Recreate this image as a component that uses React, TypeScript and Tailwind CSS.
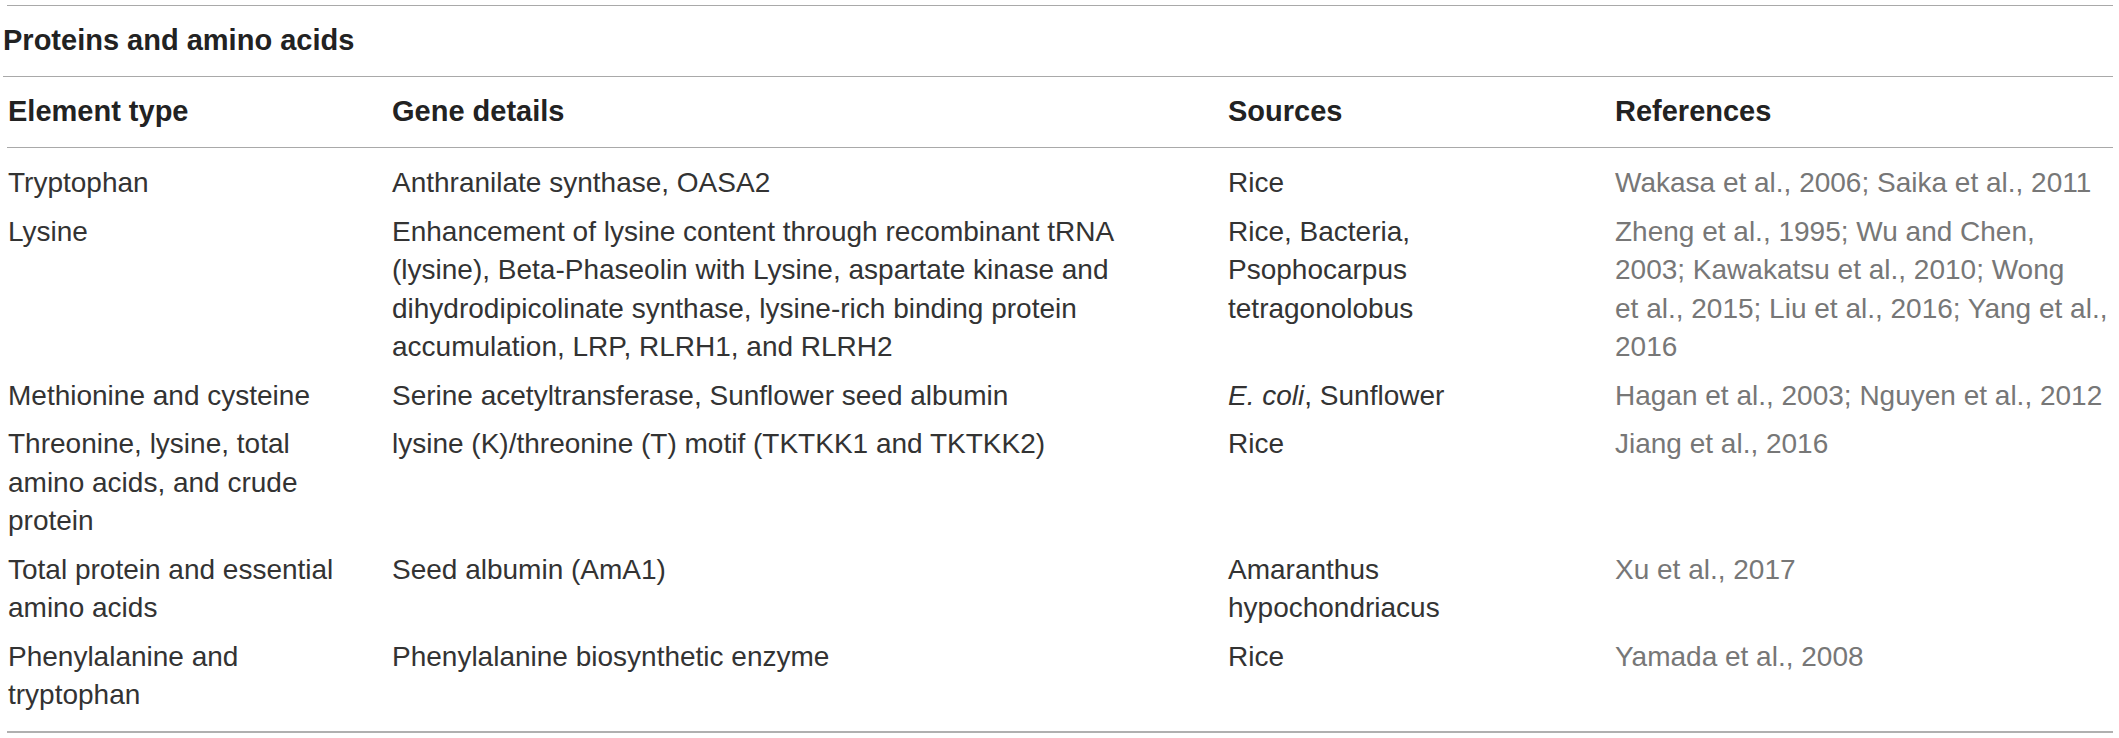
import React from "react";

type Row = {
  element: string[];
  gene: string[];
  sources: React.ReactNode[];
  refs: string[];
};

const rows: Row[] = [
  {
    element: ["Tryptophan"],
    gene: ["Anthranilate synthase, OASA2"],
    sources: ["Rice"],
    refs: ["Wakasa et al., 2006; Saika et al., 2011"],
  },
  {
    element: ["Lysine"],
    gene: [
      "Enhancement of lysine content through recombinant tRNA",
      "(lysine), Beta-Phaseolin with Lysine, aspartate kinase and",
      "dihydrodipicolinate synthase, lysine-rich binding protein",
      "accumulation, LRP, RLRH1, and RLRH2",
    ],
    sources: ["Rice, Bacteria,", "Psophocarpus", "tetragonolobus"],
    refs: [
      "Zheng et al., 1995; Wu and Chen,",
      "2003; Kawakatsu et al., 2010; Wong",
      "et al., 2015; Liu et al., 2016; Yang et al.,",
      "2016",
    ],
  },
  {
    element: ["Methionine and cysteine"],
    gene: ["Serine acetyltransferase, Sunflower seed albumin"],
    sources: [
      <>
        <i>E. coli</i>, Sunflower
      </>,
    ],
    refs: ["Hagan et al., 2003; Nguyen et al., 2012"],
  },
  {
    element: ["Threonine, lysine, total", "amino acids, and crude", "protein"],
    gene: ["lysine (K)/threonine (T) motif (TKTKK1 and TKTKK2)"],
    sources: ["Rice"],
    refs: ["Jiang et al., 2016"],
  },
  {
    element: ["Total protein and essential", "amino acids"],
    gene: ["Seed albumin (AmA1)"],
    sources: ["Amaranthus", "hypochondriacus"],
    refs: ["Xu et al., 2017"],
  },
  {
    element: ["Phenylalanine and", "tryptophan"],
    gene: ["Phenylalanine biosynthetic enzyme"],
    sources: ["Rice"],
    refs: ["Yamada et al., 2008"],
  },
];

function Lines({ items }: { items: React.ReactNode[] }) {
  return (
    <div>
      {items.map((t, i) => (
        <div key={i} className="whitespace-nowrap">
          {t}
        </div>
      ))}
    </div>
  );
}

export default function App() {
  const font = { fontFamily: '"Liberation Sans", Arial, Helvetica, sans-serif' };
  return (
    <div className="w-[2119px] h-[738px] bg-white pt-[5px]" style={font}>
      <div className="ml-[7px] w-[2106px] border-t border-[#a9a9a9]">
        <div className="h-[71px] flex items-center -ml-[4px] border-b border-[#a9a9a9] text-[29px] font-bold text-[#222222]">
          Proteins and amino acids
        </div>
        <div className="grid grid-cols-[385px_836px_387px_498px] h-[71px] items-center border-b border-[#a9a9a9] text-[29px] font-bold text-[#222222]">
          <div className="pl-px">Element type</div>
          <div>Gene details</div>
          <div>Sources</div>
          <div>References</div>
        </div>
        <div className="pt-[11px] pb-[11px] border-b-2 border-[#b0b0b0] text-[28px] leading-[38.5px] text-[#333333]">
          {rows.map((r, i) => (
            <div key={i} className="grid grid-cols-[385px_836px_387px_498px] py-[5px]">
              <div className="pl-px">
                <Lines items={r.element} />
              </div>
              <div>
                <Lines items={r.gene} />
              </div>
              <div>
                <Lines items={r.sources} />
              </div>
              <div className="text-[#777777]">
                <Lines items={r.refs} />
              </div>
            </div>
          ))}
        </div>
      </div>
    </div>
  );
}
